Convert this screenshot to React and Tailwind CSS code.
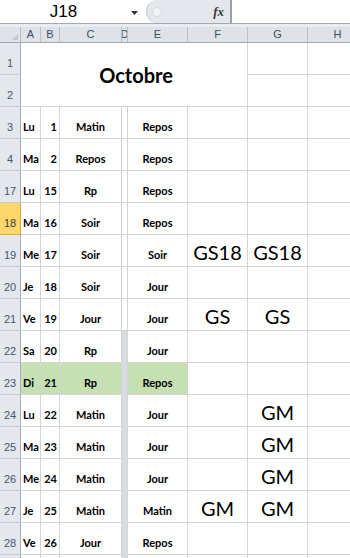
import React from "react";

const rows = [
  { n: 3, d: "Lu", k: "1", c: "Matin", e: "Repos" },
  { n: 4, d: "Ma", k: "2", c: "Repos", e: "Repos" },
  { n: 17, d: "Lu", k: "15", c: "Rp", e: "Repos" },
  { n: 18, d: "Ma", k: "16", c: "Soir", e: "Repos", sel: true },
  { n: 19, d: "Me", k: "17", c: "Soir", e: "Soir", f: "GS18", g: "GS18" },
  { n: 20, d: "Je", k: "18", c: "Soir", e: "Jour" },
  { n: 21, d: "Ve", k: "19", c: "Jour", e: "Jour", f: "GS", g: "GS" },
  { n: 22, d: "Sa", k: "20", c: "Rp", e: "Jour", grey: true },
  { n: 23, d: "Di", k: "21", c: "Rp", e: "Repos", grey: true, green: true },
  { n: 24, d: "Lu", k: "22", c: "Matin", e: "Jour", g: "GM", grey: true },
  { n: 25, d: "Ma", k: "23", c: "Matin", e: "Jour", g: "GM", grey: true },
  { n: 26, d: "Me", k: "24", c: "Matin", e: "Jour", g: "GM", grey: true },
  { n: 27, d: "Je", k: "25", c: "Matin", e: "Matin", f: "GM", g: "GM", grey: true },
  { n: 28, d: "Ve", k: "26", c: "Jour", e: "Repos", grey: true },
  { n: "", d: "", k: "", c: "", e: "", grey: true },
];

const font = "font-['Lato','Open_Sans',sans-serif]";
const hdrFont = "font-['Liberation_Sans','Arial',sans-serif]";

function RowHead({ n, sel }) {
  return (
    <div
      className={`w-[21px] h-[32px] shrink-0 flex items-end justify-center pb-[4px] border-b text-[11px] leading-[14px] ${hdrFont} ${
        sel
          ? "bg-[#fcd86c] border-r border-r-[#e2a33b] border-b-[#e2a33b] text-[#3a3a3a]"
          : "bg-[#e4e7ec] border-r border-r-[#a9b0ba] border-b-[#c9ced6] text-[#46566d]"
      }`}
    >
      {n}
    </div>
  );
}

function Cell({ w, bg = "", align = "justify-center", big, children }) {
  return (
    <div
      className={`${w} h-[32px] shrink-0 flex items-end border-r border-b border-[#d4d4d4] ${align} ${bg} ${
        big
          ? "text-[20px] leading-[24px] pb-[2px] font-normal"
          : "text-[11px] leading-[14px] pb-[4px] font-bold"
      } text-black ${font}`}
    >
      {children}
    </div>
  );
}

export default function App() {
  const cols = [
    ["A", "w-[20px]"],
    ["B", "w-[19px]"],
    ["C", "w-[62px]"],
    ["D", "w-[6px]"],
    ["E", "w-[60px]"],
    ["F", "w-[60px]"],
    ["G", "w-[60px]"],
    ["H", "w-[60px]"],
  ];

  return (
    <div className="w-[350px] h-[558px] overflow-hidden bg-white">
      {/* formula bar */}
      <div className="flex h-[24px] border-b border-[#a3aab3] bg-white">
        <div className="w-[146px] shrink-0 flex items-center">
          <div className={`w-[127px] text-center text-[17px] leading-[20px] text-black ${hdrFont}`}>
            J18
          </div>
          <svg width="8" height="5" viewBox="0 0 8 5" className="ml-[4px] mt-[3px]">
            <path d="M0 0 H7 L3.5 4 Z" fill="#333" />
          </svg>
        </div>
        <div className="w-[84px] shrink-0 h-[23px] rounded-l-full bg-[#e4e7eb] border-l border-[#c3c8cf] flex items-center justify-between pl-[5px] pr-[6px]">
          <div className="w-[10px] h-[10px] rounded-full bg-[#f1f3f5] border border-[#d5d9de]" />
          <span className="text-[13px] leading-[16px] italic font-bold text-[#3a3a3a] font-['Liberation_Serif',serif]">
            fx
          </span>
        </div>
        <div className="flex-1 border-l-2 border-[#9aa1aa] bg-white" />
      </div>
      <div className="h-[3px] bg-[#e9ecf0]" />

      {/* column headers */}
      <div className={`flex h-[16px] bg-[#dfe3e8] border-b border-[#9ea7b3] text-[11px] leading-[15px] text-[#3b4c63] ${hdrFont}`}>
        <div className="w-[21px] shrink-0 border-r border-[#b9bfc8] flex items-end justify-end pr-[2px] pb-[2px]">
          <svg width="6" height="6" viewBox="0 0 6 6">
            <path d="M6 0 V6 H0 Z" fill="#c2c7ce" />
          </svg>
        </div>
        {cols.map(([l, w]) => (
          <div key={l} className={`${w} shrink-0 border-r border-[#b9bfc8] flex justify-center overflow-hidden`}>
            {l}
          </div>
        ))}
      </div>

      {/* rows 1-2 merged */}
      <div className="flex">
        <div className="flex flex-col">
          <RowHead n={1} />
          <RowHead n={2} />
        </div>
        <div
          className={`w-[227px] h-[64px] shrink-0 border-r border-b border-[#d4d4d4] flex items-center justify-center pl-[4px] text-[20px] font-bold text-black ${font}`}
        >
          Octobre
        </div>
        <div className="flex flex-col">
          <Cell w="w-[60px]" />
          <Cell w="w-[60px]" />
        </div>
        <div className="flex flex-col">
          <Cell w="w-[60px]" />
          <Cell w="w-[60px]" />
        </div>
      </div>

      {rows.map((r, i) => {
        const green = r.green ? "bg-[#c6e0b4]" : "";
        return (
          <div key={i} className="flex">
            <RowHead n={r.n} sel={r.sel} />
            <Cell w="w-[20px]" bg={green} align="justify-start pl-[2px]">
              {r.d}
            </Cell>
            <Cell w="w-[19px]" bg={green} align="justify-end pr-[2px]">
              {r.k}
            </Cell>
            <Cell w="w-[62px]" bg={green}>
              {r.c}
            </Cell>
            {r.grey ? (
              <div className="w-[6px] h-[32px] shrink-0 bg-[#d7dce3] border-r border-[#d4d4d4]" />
            ) : (
              <Cell w="w-[6px]" />
            )}
            <Cell w="w-[60px]" bg={green}>
              {r.e}
            </Cell>
            <Cell w="w-[60px]" big>
              {r.f}
            </Cell>
            <Cell w="w-[60px]" big>
              {r.g}
            </Cell>
            <Cell w="w-[60px]" />
          </div>
        );
      })}
    </div>
  );
}
